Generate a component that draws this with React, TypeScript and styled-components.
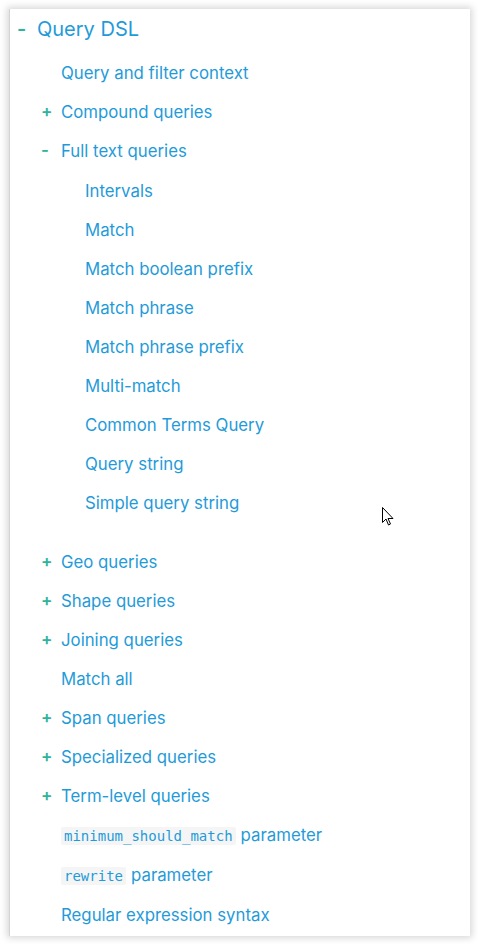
import styled, { createGlobalStyle } from 'styled-components';

const GlobalStyle = createGlobalStyle`
  html, body {
    margin: 0;
    padding: 0;
    background: #ffffff;
  }
  body {
    font-family: Inter, "Open Sans", sans-serif;
  }
`;

type Node = {
  label: React.ReactNode;
  open?: boolean;
  children?: Node[];
};

const Page = styled.div`
  position: relative;
  width: 478px;
  height: 944px;
  padding: 9px 8px 8px 9px;
  box-sizing: border-box;
`;

const Card = styled.div`
  width: 461px;
  height: 927px;
  box-sizing: border-box;
  background: #fff;
  border-left: 1px solid #d4d4d4;
  box-shadow: 0 0 7px 2px rgba(0, 0, 0, 0.16);
  padding: 0 0 0 7px;
  overflow: hidden;
`;

const List = styled.ul<{ $top?: number; $bottom?: number }>`
  list-style: none;
  margin: ${(p) => p.$top ?? 0}px 0 ${(p) => p.$bottom ?? 0}px 0;
  padding: 0;
`;

const Row = styled.div<{ $level: number; $head?: boolean; $tall?: boolean }>`
  display: flex;
  align-items: center;
  height: ${(p) => (p.$head ? 39 : p.$tall ? 40 : 39)}px;
  padding-left: ${(p) => p.$level * 24}px;
  color: #1f9bd9;
  font-size: ${(p) => (p.$head ? 20 : 16.8)}px;
  white-space: nowrap;
`;

const Toggle = styled.span<{ $head?: boolean }>`
  width: 20px;
  flex: none;
  color: #2fb39b;
  font-size: ${(p) => (p.$head ? 20 : 17)}px;
  font-weight: 600;
  line-height: 1;
`;

const Spacer = styled.span`
  width: 20px;
  flex: none;
`;

const Code = styled.code`
  font-family: "DejaVu Sans Mono", "Liberation Mono", monospace;
  font-size: 14px;
  background: #f5f5f5;
  padding: 1px 3px;
  margin-right: 5px;
  border-radius: 2px;
`;

const Cursor = styled.svg`
  position: absolute;
  left: 382px;
  top: 507px;
`;

const fullText: Node[] = [
  { label: 'Intervals' },
  { label: 'Match' },
  { label: 'Match boolean prefix' },
  { label: 'Match phrase' },
  { label: 'Match phrase prefix' },
  { label: 'Multi-match' },
  { label: 'Common Terms Query' },
  { label: 'Query string' },
  { label: 'Simple query string' },
];

const tree: Node[] = [
  { label: 'Query and filter context' },
  { label: 'Compound queries', children: [] },
  { label: 'Full text queries', open: true, children: fullText },
  { label: 'Geo queries', children: [] },
  { label: 'Shape queries', children: [] },
  { label: 'Joining queries', children: [] },
  { label: 'Match all' },
  { label: 'Span queries', children: [] },
  { label: 'Specialized queries', children: [] },
  { label: 'Term-level queries', children: [] },
  {
    label: (
      <>
        <Code>minimum_should_match</Code>parameter
      </>
    ),
  },
  {
    label: (
      <>
        <Code>rewrite</Code>parameter
      </>
    ),
  },
  { label: 'Regular expression syntax' },
];

function Item({ node, level }: { node: Node; level: number }) {
  const hasKids = node.children !== undefined;
  const tall = typeof node.label !== 'string';
  return (
    <li>
      <Row $level={level} $tall={tall}>
        {hasKids ? <Toggle>{node.open ? '-' : '+'}</Toggle> : <Spacer />}
        <span>{node.label}</span>
      </Row>
      {node.open && node.children && (
        <List $top={1} $bottom={20}>
          {node.children.map((c, i) => (
            <Item key={i} node={c} level={level + 1} />
          ))}
        </List>
      )}
    </li>
  );
}

export default function App() {
  return (
    <>
      <GlobalStyle />
      <Page>
        <Card>
          <Row $level={0} $head>
            <Toggle $head>-</Toggle>
            <span>Query DSL</span>
          </Row>
          <List $top={5}>
            {tree.map((n, i) => (
              <Item key={i} node={n} level={1} />
            ))}
          </List>
        </Card>
        <Cursor width="12" height="19" viewBox="0 0 12 19">
          <path
            d="M0.5 0.5 L0.5 15.5 L4 12 L6.5 18 L8.5 17 L6 11.5 L11 11.5 Z"
            fill="#fff"
            stroke="#000"
            strokeWidth="1"
            strokeLinejoin="round"
          />
        </Cursor>
      </Page>
    </>
  );
}
